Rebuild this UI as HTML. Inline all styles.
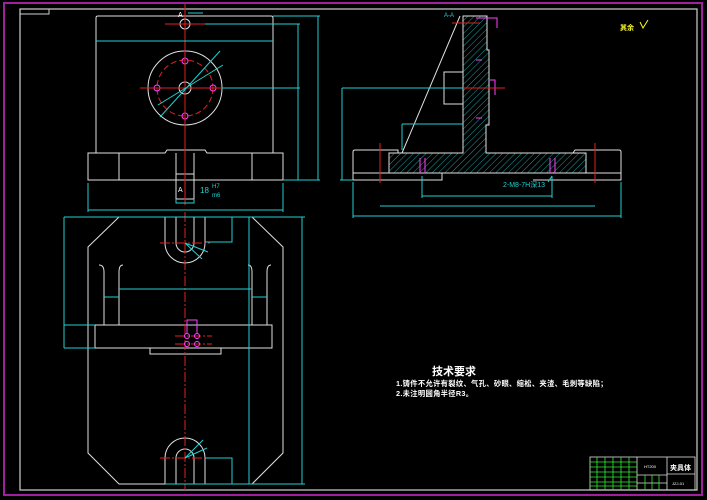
<!DOCTYPE html>
<html><head><meta charset="utf-8"><style>
html,body{margin:0;padding:0;background:#000;}
svg{display:block}
text{font-family:"Liberation Sans","Noto Sans CJK SC",sans-serif;}
</style></head><body>
<svg width="707" height="500" viewBox="0 0 707 500" xmlns="http://www.w3.org/2000/svg">
<rect width="707" height="500" fill="#000"/>
<rect x="4" y="3" width="698" height="492" fill="none" stroke="#a020a0" stroke-width="2"/>
<rect x="20" y="9" width="677" height="481" fill="none" stroke="#d0d0d0" stroke-width="1.2"/>
<rect x="20" y="9" width="29" height="5" fill="none" stroke="#d0d0d0" stroke-width="1"/>

<g fill="none" stroke-width="1">
<g stroke="#e0e0e0">
<path d="M96 153 V18 Q96 16 98 16 H271 Q273 16 273 18 V153"/>
<path d="M88 153 H165 L167 150 H205 L207 153 H283 V180 H88 Z"/>
<path d="M119 153 V180 M252 153 V180"/>
<path d="M176 153 V199 H194 V153 M176 174 H194"/>
<circle cx="185" cy="24" r="5"/>
<circle cx="185" cy="88" r="37"/>
<circle cx="185" cy="88" r="6"/>
</g>
<circle cx="185" cy="88" r="28" stroke="#e02020" stroke-dasharray="6 3"/>
<g stroke="#ff40ff"><circle cx="185" cy="61" r="3"/><circle cx="157" cy="88" r="3"/><circle cx="213" cy="88" r="3"/><circle cx="185" cy="116" r="3"/></g>
<g stroke="#e02020">
<path d="M185 4 V205 M140 88 H230 M165 24 H205"/>
</g>
<g stroke="#20d0d0">
<path d="M96 41 H273"/>
<path d="M273 16 H320 M205 24 H300 M222 88 H300 M283 180 H320 M298 24 V180 M318 16 V180"/>
<path d="M88 210 H283 M88 183 V212 M283 183 V212"/>
<path d="M160 117 L220 51 M158 105 L223 65"/>
<path d="M176 199 V203 H194 V199 M188 13 H203"/>
</g>
<text x="178" y="17" fill="#fff" font-size="7">A</text>
<text x="178" y="192" fill="#fff" font-size="7">A</text>
<text x="200" y="193" fill="#20d0d0" font-size="8">18</text>
<text x="212" y="188" fill="#20d0d0" font-size="6">H7</text>
<text x="212" y="197" fill="#20d0d0" font-size="6">m6</text>

<g stroke="#e0e0e0">
<path d="M119 217 H252 L283 247 V453 L252 484 H119 L88 453 V247 Z"/>
<rect x="95" y="325" width="177" height="23"/>
<rect x="150" y="348" width="71" height="6"/>
<path d="M165 217 V243 A20 20 0 0 0 205 243 V217 M176 217 V243 A9 9 0 0 0 194 243 V217"/>
<path d="M165 484 V458 A20 20 0 0 1 205 458 V484 M176 484 V458 A9 9 0 0 1 194 458 V484"/>
<path d="M104 325 V272 Q104 265 99 265 M119 325 V272 Q119 265 123 265"/>
<path d="M252 325 V272 Q252 265 248 265 M267 325 V272 Q267 265 271 265"/>
</g>
<path d="M185 212 V490 M160 243 H210 M160 458 H210 M175 336 H212 M175 344 H212" stroke="#e02020" stroke-dasharray="10 2 2 2"/>
<g stroke="#ff40ff"><circle cx="187" cy="336" r="2.5"/><circle cx="197" cy="336" r="2.5"/><circle cx="187" cy="344" r="2.5"/><circle cx="197" cy="344" r="2.5"/><path d="M187 333 V320 H197 V333"/></g>
<g stroke="#20d0d0">
<path d="M64 217 H305 M165 484 H305 M64 217 V348 M64 325 H95 M64 348 H95"/>
<path d="M249 217 V484 M302 217 V484 M119 289 H252 M205 242 H232 V217 M205 458 H232 V484"/>
<path d="M185 243 L208 252 M185 243 L202 259 M185 458 L203 440 M185 458 L207 448"/>
<path d="M104 297 H119 M252 297 H267"/>
</g>

<defs><pattern id="h" width="4.5" height="4.5" patternUnits="userSpaceOnUse" patternTransform="rotate(45)"><line x1="0" y1="0" x2="0" y2="5" stroke="#20c0c0" stroke-width="0.8"/></pattern></defs>
<path d="M463 16 H487 V50 H489 V125 H486 V153 H586 V173 H389 V153 H463 Z" fill="url(#h)" stroke="#e0e0e0"/>
<g stroke="#e0e0e0">
<path d="M353 180 V152 Q353 150 355 150 H398 V153 M389 153 V173 M353 173 H442 V180 H353 M533 173 H621 V180 H533 M621 180 V152 Q621 150 619 150 H575 L573 153"/>
<rect x="444" y="72" width="19" height="32"/>
<path d="M460 16 L402 153"/>
</g>
<g stroke="#ff40ff"><path d="M420 158 V173 M425 158 V173 M550 158 V173 M555 158 V173 M476 18 H497 V28 M476 60 H482 M476 118 H482 M490 80 H495 V95"/></g>
<g stroke="#e02020"><path d="M380 143 V183 M595 143 V183 M452 88 H505 M452 23 H480"/></g>
<g stroke="#20d0d0">
<path d="M342 88 H463 M342 88 V180 M340 180 H353 M402 124 H463 M402 124 V150"/>
<path d="M422 196 H552 M380 206 H595 M353 216 H621 M422 176 V198 M552 176 V198 M353 182 V218 M621 182 V218"/>
<path d="M548 182 L552 176"/>
</g>
<text x="444" y="17" fill="#20d0d0" font-size="6">A-A</text>
<text x="503" y="187" fill="#20d0d0" font-size="7">2-M8-7H深13</text>
<text x="620" y="30" fill="#ffff20" font-size="7" font-weight="bold">其余</text>
<path d="M640 22 L643 28 L648 20" stroke="#ffff20"/>
</g>

<text x="432" y="375" fill="#fff" font-size="11" font-weight="bold">技术要求</text>
<text x="396" y="386" fill="#fff" font-size="7.3" font-weight="bold" letter-spacing="0.3">1.铸件不允许有裂纹、气孔、砂眼、缩松、夹渣、毛刺等缺陷；</text>
<text x="396" y="396" fill="#fff" font-size="7.3" font-weight="bold" letter-spacing="0.3">2.未注明圆角半径R3。</text>

<g fill="none" stroke-width="0.8">
<rect x="590" y="457" width="105" height="33" stroke="#e0e0e0"/>
<path d="M637 457 V490 M667 457 V490 M667 474 H695 M637 475 H667 M637 483 H667" stroke="#e0e0e0"/>
<g stroke="#30f030">
<path d="M590 462 H637 M590 467 H637 M590 472 H637 M590 477 H637 M590 482 H637 M590 486 H637"/>
<path d="M597 457 V490 M605 457 V490 M613 457 V490 M621 457 V490 M629 457 V490"/>
<path d="M645 475 V490 M652 475 V490 M659 475 V490"/>
</g>
</g>
<text x="644" y="468" fill="#fff" font-size="4">HT200</text>
<text x="670" y="470" fill="#fff" font-size="7" font-weight="bold">夹具体</text>
<text x="672" y="485" fill="#fff" font-size="4">JZJ-01</text>
</svg>
</body></html>
